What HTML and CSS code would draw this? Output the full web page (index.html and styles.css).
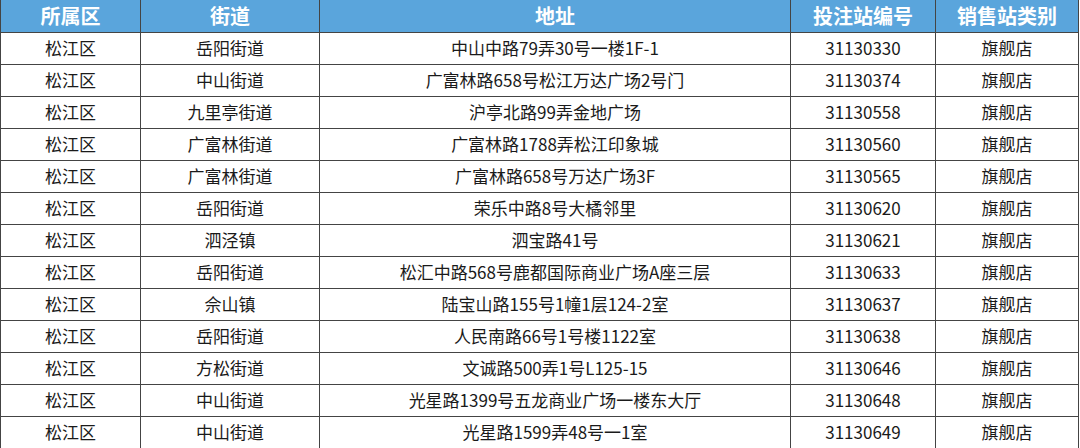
FILE: index.html
```html
<!DOCTYPE html>
<html lang="zh-CN">
<head>
<meta charset="utf-8">
<link rel="stylesheet" href="styles.css">
</head>
<body>
<table class="grid">
  <colgroup>
    <col class="c1"><col class="c2"><col class="c3"><col class="c4"><col class="c5">
  </colgroup>
  <thead>
    <tr><th>所属区</th><th>街道</th><th>地址</th><th>投注站编号</th><th>销售站类别</th></tr>
  </thead>
  <tbody>
    <tr><td>松江区</td><td>岳阳街道</td><td>中山中路79弄30号一楼1F-1</td><td>31130330</td><td>旗舰店</td></tr>
    <tr><td>松江区</td><td>中山街道</td><td>广富林路658号松江万达广场2号门</td><td>31130374</td><td>旗舰店</td></tr>
    <tr><td>松江区</td><td>九里亭街道</td><td>沪亭北路99弄金地广场</td><td>31130558</td><td>旗舰店</td></tr>
    <tr><td>松江区</td><td>广富林街道</td><td>广富林路1788弄松江印象城</td><td>31130560</td><td>旗舰店</td></tr>
    <tr><td>松江区</td><td>广富林街道</td><td>广富林路658号万达广场3F</td><td>31130565</td><td>旗舰店</td></tr>
    <tr><td>松江区</td><td>岳阳街道</td><td>荣乐中路8号大橘邻里</td><td>31130620</td><td>旗舰店</td></tr>
    <tr><td>松江区</td><td>泗泾镇</td><td>泗宝路41号</td><td>31130621</td><td>旗舰店</td></tr>
    <tr><td>松江区</td><td>岳阳街道</td><td>松汇中路568号鹿都国际商业广场A座三层</td><td>31130633</td><td>旗舰店</td></tr>
    <tr><td>松江区</td><td>佘山镇</td><td>陆宝山路155号1幢1层124-2室</td><td>31130637</td><td>旗舰店</td></tr>
    <tr><td>松江区</td><td>岳阳街道</td><td>人民南路66号1号楼1122室</td><td>31130638</td><td>旗舰店</td></tr>
    <tr><td>松江区</td><td>方松街道</td><td>文诚路500弄1号L125-15</td><td>31130646</td><td>旗舰店</td></tr>
    <tr><td>松江区</td><td>中山街道</td><td>光星路1399号五龙商业广场一楼东大厅</td><td>31130648</td><td>旗舰店</td></tr>
    <tr><td>松江区</td><td>中山街道</td><td>光星路1599弄48号一1室</td><td>31130649</td><td>旗舰店</td></tr>
  </tbody>
</table>
</body>
</html>
```
FILE: styles.css
```css
html, body {
  margin: 0;
  padding: 0;
  background: #ffffff;
}
body {
  font-family: "Noto Sans CJK SC", "Noto Sans", "DejaVu Sans", sans-serif;
  color: #1a1a1a;
}
.grid {
  border-collapse: collapse;
  table-layout: fixed;
  width: 1078px;
}
.c1 { width: 140px; }
.c2 { width: 179px; }
.c3 { width: 471px; }
.c4 { width: 145px; }
.c5 { width: 143px; }
.grid th,
.grid td {
  height: 32px;
  padding: 0;
  text-align: center;
  vertical-align: middle;
  border: 1px solid #444444;
  box-sizing: border-box;
  white-space: nowrap;
  overflow: hidden;
}
.grid th {
  background: #5aa5dc;
  color: #ffffff;
  font-size: 20px;
  font-weight: 700;
  border-top: none;
  line-height: 30px;
}
.grid td {
  font-size: 17px;
  line-height: 30px;
}
```
